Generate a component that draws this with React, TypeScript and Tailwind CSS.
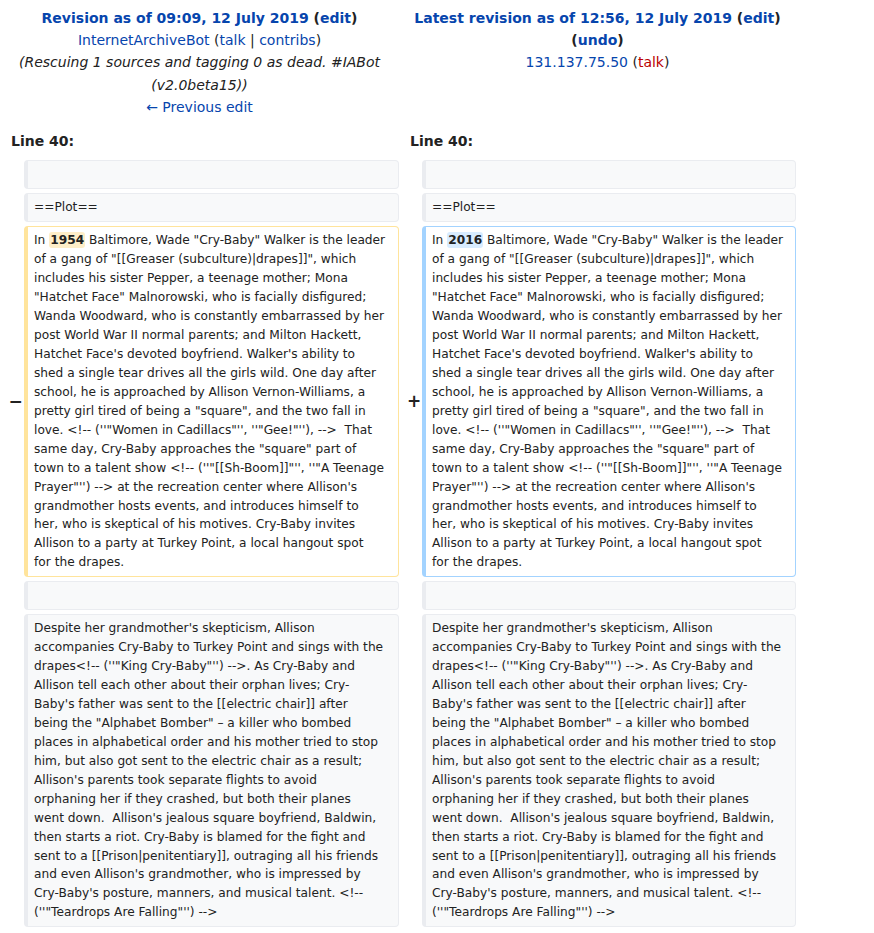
import React from 'react';

const link = 'text-[#0645ad]';

const changedLeft = [
  'of a gang of "[[Greaser (subculture)|drapes]]", which',
  'includes his sister Pepper, a teenage mother; Mona',
  '"Hatchet Face" Malnorowski, who is facially disfigured;',
  'Wanda Woodward, who is constantly embarrassed by her',
  'post World War II normal parents; and Milton Hackett,',
  "Hatchet Face's devoted boyfriend. Walker's ability to",
  'shed a single tear drives all the girls wild. One day after',
  'school, he is approached by Allison Vernon-Williams, a',
  'pretty girl tired of being a "square", and the two fall in',
  'love. <!-- (\'\'"Women in Cadillacs"\'\', \'\'"Gee!"\'\'), -->  That',
  'same day, Cry-Baby approaches the "square" part of',
  'town to a talent show <!-- (\'\'"[[Sh-Boom]]"\'\', \'\'"A Teenage',
  "Prayer\"'') --> at the recreation center where Allison's",
  'grandmother hosts events, and introduces himself to',
  'her, who is skeptical of his motives. Cry-Baby invites',
  'Allison to a party at Turkey Point, a local hangout spot',
  'for the drapes.',
];

const contextLines = [
  "Despite her grandmother's skepticism, Allison",
  'accompanies Cry-Baby to Turkey Point and sings with the',
  'drapes<!-- (\'\'"King Cry-Baby"\'\') -->. As Cry-Baby and',
  'Allison tell each other about their orphan lives; Cry-',
  "Baby's father was sent to the [[electric chair]] after",
  'being the "Alphabet Bomber" – a killer who bombed',
  'places in alphabetical order and his mother tried to stop',
  'him, but also got sent to the electric chair as a result;',
  "Allison's parents took separate flights to avoid",
  'orphaning her if they crashed, but both their planes',
  "went down.  Allison's jealous square boyfriend, Baldwin,",
  'then starts a riot. Cry-Baby is blamed for the fight and',
  'sent to a [[Prison|penitentiary]], outraging all his friends',
  "and even Allison's grandmother, who is impressed by",
  "Cry-Baby's posture, manners, and musical talent. <!--",
  '(\'\'"Teardrops Are Falling"\'\') -->',
];

type Kind = 'context' | 'deleted' | 'added';

function Box({ kind, children }: { kind: Kind; children?: React.ReactNode }) {
  const tone =
    kind === 'deleted'
      ? 'bg-white border-[#ffe49c]'
      : kind === 'added'
        ? 'bg-white border-[#a3d3ff]'
        : 'bg-[#f8f9fa] border-[#eaecf0]';
  return (
    <div
      className={`min-h-[29px] rounded-[4px] border border-l-4 px-[6px] py-[4px] text-[12.2px] leading-[18.94px] whitespace-pre text-[#222] ${tone}`}
    >
      {children}
    </div>
  );
}

function Lines({ lines }: { lines: string[] }) {
  return (
    <>
      {lines.map((l, i) => (
        <div key={i}>{l}</div>
      ))}
    </>
  );
}

function Changed({ word, kind }: { word: string; kind: 'deleted' | 'added' }) {
  return (
    <Box kind={kind}>
      <div>
        In{' '}
        <span
          className={`rounded-[3px] px-[1px] py-[1px] font-bold ${kind === 'deleted' ? 'bg-[#feeec8]' : 'bg-[#d8ecff]'}`}
        >
          {word}
        </span>{' '}
        Baltimore, Wade "Cry-Baby" Walker is the leader
      </div>
      <Lines lines={changedLeft} />
    </Box>
  );
}

function Marker({ sign }: { sign?: string }) {
  return (
    <div className="flex items-center justify-center pl-[7px] text-[17px] font-bold text-[#222]">
      {sign}
    </div>
  );
}

export default function App() {
  return (
    <div
      className="min-h-[933px] w-[874px] bg-white text-[#222]"
      style={{ fontFamily: '"DejaVu Sans", sans-serif' }}
    >
      <div className="grid w-[796px] grid-cols-[24px_375px_23px_374px] gap-y-[4px]">
        {/* header */}
        <div className="col-span-2 pt-[7px] text-center text-[14px] leading-[22.2px]">
          <div className="font-bold">
            <span className={link}>Revision as of 09:09, 12 July 2019</span> (
            <span className={link}>edit</span>)
          </div>
          <div>
            <span className={link}>InternetArchiveBot</span> (<span className={link}>talk</span> |{' '}
            <span className={link}>contribs</span>)
          </div>
          <div className="px-[18px] italic text-[#222]">
            (Rescuing 1 sources and tagging 0 as dead. #IABot (v2.0beta15))
          </div>
          <div>
            <span className={link}>← Previous edit</span>
          </div>
        </div>
        <div className="col-span-2 pt-[7px] text-center text-[14px] leading-[22.2px]">
          <div className="font-bold">
            <span className={link}>Latest revision as of 12:56, 12 July 2019</span> (
            <span className={link}>edit</span>)
          </div>
          <div className="font-bold">
            (<span className={link}>undo</span>)
          </div>
          <div>
            <span className={link}>131.137.75.50</span> (
            <span className="text-[#ba0000]">talk</span>)
          </div>
        </div>

        {/* line numbers */}
        <div className="col-span-2 pt-[8px] pb-[4px] pl-[11px] text-[14px] font-bold leading-[22.4px]">
          Line 40:
        </div>
        <div className="col-span-2 pt-[8px] pb-[4px] pl-[11px] text-[14px] font-bold leading-[22.4px]">
          Line 40:
        </div>

        {/* blank context */}
        <Marker />
        <Box kind="context" />
        <Marker />
        <Box kind="context" />

        {/* heading context */}
        <Marker />
        <Box kind="context">==Plot==</Box>
        <Marker />
        <Box kind="context">==Plot==</Box>

        {/* changed paragraph */}
        <Marker sign="−" />
        <Changed word="1954" kind="deleted" />
        <Marker sign="+" />
        <Changed word="2016" kind="added" />

        {/* blank context */}
        <Marker />
        <Box kind="context" />
        <Marker />
        <Box kind="context" />

        {/* trailing context */}
        <Marker />
        <Box kind="context">
          <Lines lines={contextLines} />
        </Box>
        <Marker />
        <Box kind="context">
          <Lines lines={contextLines} />
        </Box>
      </div>
    </div>
  );
}
